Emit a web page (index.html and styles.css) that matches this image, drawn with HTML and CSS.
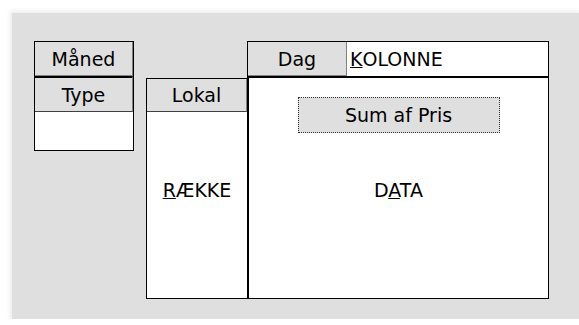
FILE: index.html
```html
<!DOCTYPE html>
<html lang="da">
<head>
  <meta charset="UTF-8" />
  <title>Pivottabel layout</title>
  <link rel="stylesheet" href="styles.css">
</head>
<body>
  <div class="sheet">
    <div class="pagefields">
      <div class="fld">Måned</div>
      <div class="fld">Type</div>
      <div class="drop"></div>
    </div>

    <div class="pivot">
      <div class="corner"></div>
      <div class="colbar">
        <div class="fld dag">Dag</div>
        <div class="collabel"><u>K</u>OLONNE</div>
      </div>
      <div class="rowbar">
        <div class="fld lokal">Lokal</div>
        <div class="rowlabel"><u>R</u>ÆKKE</div>
      </div>
      <div class="data">
        <button class="sumfield">Sum af Pris</button>
        <div class="datalabel">D<u>A</u>TA</div>
      </div>
    </div>
  </div>
</body>
</html>
```

FILE: styles.css
```css
body {
  margin: 0;
  background: #fff;
  font-family: "DejaVu Sans", sans-serif;
  font-size: 19px;
  color: #000;
  overflow: hidden;
}
.sheet {
  margin: 13px 0 0 12px;
  height: 306px;
  box-sizing: border-box;
  padding: 28px 0 0 22px;
  background: #dfdfdf;
  box-shadow: 0 0 5px 2px #ececec;
  display: flex;
  align-items: flex-start;
  gap: 12px;
}
.fld {
  box-sizing: border-box;
  height: 34px;
  background: #dfdfdf;
  border-right: 1px solid #808080;
  border-bottom: 1px solid #808080;
  display: flex;
  align-items: center;
  justify-content: center;
}
.pagefields {
  width: 100px;
  box-sizing: border-box;
  border: 1px solid #000;
}
.pagefields .fld + .fld {
  height: 36px;
  border-top: 2px solid #000;
  border-bottom-color: #404040;
}
.drop {
  height: 38px;
  background: #fff;
}
.pivot {
  display: grid;
  grid-template-columns: 101px 302px;
  grid-template-rows: 37px 221px;
}
.colbar {
  box-sizing: border-box;
  border: 1px solid #000;
  border-bottom-width: 2px;
  display: flex;
}
.dag {
  width: 99px;
}
.collabel {
  flex: 1;
  height: 34px;
  background: #fff;
  display: flex;
  align-items: center;
  padding-left: 3px;
}
.rowbar {
  box-sizing: border-box;
  border-left: 1px solid #000;
  border-top: 1px solid #000;
  border-bottom: 1px solid #000;
  background: #fff;
}
.lokal {
  height: 33px;
  border-bottom-color: #404040;
}
.rowlabel {
  padding-top: 67px;
  line-height: 22px;
  text-align: center;
}
.data {
  box-sizing: border-box;
  border-left: 2px solid #000;
  border-right: 1px solid #000;
  border-bottom: 1px solid #000;
  background: #fff;
  display: flex;
  flex-direction: column;
  align-items: center;
  padding-top: 19px;
}
.sumfield {
  width: 202px;
  height: 36px;
  margin: 0;
  padding: 0;
  background: #dfdfdf;
  border: 1px dotted #333;
  font: inherit;
  color: #000;
}
.datalabel {
  margin-top: 46px;
  line-height: 22px;
}
```
